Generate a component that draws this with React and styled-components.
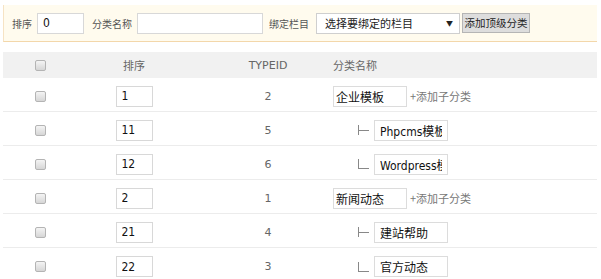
import React from "react";
import styled, { createGlobalStyle } from "styled-components";

const Global = createGlobalStyle`
  html, body { margin: 0; padding: 0; background: #fff; }
  body { font-family: "DejaVu Sans", "Noto Sans CJK SC", sans-serif; font-size: 12px; color: #333; }
`;

const Page = styled.div`
  padding: 5px 4px 0 3px;
`;

const Toolbar = styled.div`
  display: flex;
  align-items: center;
  height: 36px;
  padding-left: 8px;
  background: #fffbee;
  border-left: 1px solid #f6e3c4;
  border-bottom: 1px solid #f3d7aa;
  font-family: "Noto Sans CJK SC", sans-serif;
  font-size: 10px;
  color: #555;
`;

const Label = styled.span`
  margin-right: ${(p) => p.$gap || 5}px;
  white-space: nowrap;
`;

const TextBox = styled.input`
  box-sizing: border-box;
  width: ${(p) => p.$w}px;
  height: 21px;
  margin-right: ${(p) => p.$mr || 0}px;
  border: 1px solid #d8d8d8;
  padding: 0 5px;
  font-family: "DejaVu Sans Condensed", "DejaVu Sans", "Noto Sans CJK SC", sans-serif;
  font-size: 12px;
  color: #111;
  background: #fff;
  outline: none;
`;

const Select = styled.div`
  box-sizing: border-box;
  display: flex;
  align-items: center;
  justify-content: space-between;
  width: 144px;
  height: 21px;
  padding: 0 6px 0 8px;
  border: 1px solid #cfcfcf;
  background: #fff;
  color: #222;
  font-size: 11px;
`;

const Arrow = styled.span`
  font-size: 7px;
  color: #222;
`;

const Button = styled.button`
  box-sizing: border-box;
  width: 68px;
  height: 20px;
  margin-left: 2px;
  padding: 0;
  border: 1px solid #b5b5b5;
  background: #dddddd;
  font-family: "Noto Sans CJK SC", sans-serif;
  font-size: 10.5px;
  color: #222;
  line-height: 18px;
`;

const Table = styled.div`
  margin-top: 10px;
`;

const Row = styled.div`
  display: grid;
  grid-template-columns: 74px 114px 148px 1fr;
  align-items: center;
  box-sizing: border-box;
  height: ${(p) => (p.$head ? 26 : 34)}px;
  padding-top: ${(p) => (p.$head ? 0 : 3)}px;
  background: ${(p) => (p.$head ? "#f1f1f1" : "#fff")};
  border-bottom: ${(p) => (p.$head ? "none" : "1px solid #ececec")};
  &:last-child { border-bottom: none; }
`;

const Cell = styled.div`
  display: flex;
  align-items: center;
  justify-content: ${(p) => (p.$left ? "flex-start" : "center")};
  padding-left: ${(p) => p.$pl || 0}px;
  margin-left: ${(p) => p.$ml || 0}px;
  font-family: ${(p) => (p.$latin ? '"DejaVu Sans", sans-serif' : '"Noto Sans CJK SC", sans-serif')};
  font-size: 11px;
  color: #666;
`;

const Check = styled.span`
  display: inline-block;
  box-sizing: border-box;
  width: 11px;
  height: 11px;
  border: 1px solid #b4b4b4;
  border-radius: 2px;
  background: linear-gradient(#f4f4f4, #d6d6d6);
`;

const NameBox = styled.input`
  box-sizing: border-box;
  width: 74px;
  height: 21px;
  border: 1px solid #dcdcdc;
  padding: 0 ${(p) => p.$pad}px;
  font-family: "DejaVu Sans Condensed", "DejaVu Sans", "Noto Sans CJK SC", sans-serif;
  font-size: 12px;
  color: #111;
  background: #fff;
  outline: none;
`;

const AddChild = styled.span`
  margin-left: 3px;
  font-family: "Noto Sans CJK SC", sans-serif;
  font-size: 11px;
  color: #777;
`;

const Tree = styled.span`
  position: relative;
  display: inline-block;
  width: 10px;
  height: 10px;
  margin-left: 25px;
  margin-right: 5px;
  border-left: 1px solid #888;
  &::after {
    content: "";
    position: absolute;
    left: 0;
    top: ${(p) => (p.$last ? 9 : 5)}px;
    width: 10px;
    border-top: 1px solid #888;
  }
`;

const rows = [
  { sort: "1", id: 2, name: "企业模板", level: 0 },
  { sort: "11", id: 5, name: "Phpcms模板", level: 1 },
  { sort: "12", id: 6, name: "Wordpress模板", level: 1, last: true },
  { sort: "2", id: 1, name: "新闻动态", level: 0 },
  { sort: "21", id: 4, name: "建站帮助", level: 1 },
  { sort: "22", id: 3, name: "官方动态", level: 1, last: true },
];

export default function App() {
  return (
    <>
      <Global />
      <Page>
        <Toolbar>
          <Label>排序</Label>
          <TextBox $w={47} $mr={8} defaultValue="0" />
          <Label>分类名称</Label>
          <TextBox $w={126} $mr={6} />
          <Label $gap={7}>绑定栏目</Label>
          <Select>
            <span>选择要绑定的栏目</span>
            <Arrow>▼</Arrow>
          </Select>
          <Button>添加顶级分类</Button>
        </Toolbar>
        <Table>
          <Row $head>
            <Cell><Check /></Cell>
            <Cell>排序</Cell>
            <Cell $latin $pl={6}>TYPEID</Cell>
            <Cell $left $ml={-6}>分类名称</Cell>
          </Row>
          {rows.map((r, i) => (
            <Row key={i}>
              <Cell><Check /></Cell>
              <Cell><TextBox $w={37} defaultValue={r.sort} /></Cell>
              <Cell $latin $pl={6}>{r.id}</Cell>
              <Cell $left $ml={-6}>
                {r.level > 0 && <Tree $last={r.last} />}
                <NameBox $pad={r.level > 0 ? 5 : 2} defaultValue={r.name} />
                {r.level === 0 && <AddChild>+添加子分类</AddChild>}
              </Cell>
            </Row>
          ))}
        </Table>
      </Page>
    </>
  );
}
